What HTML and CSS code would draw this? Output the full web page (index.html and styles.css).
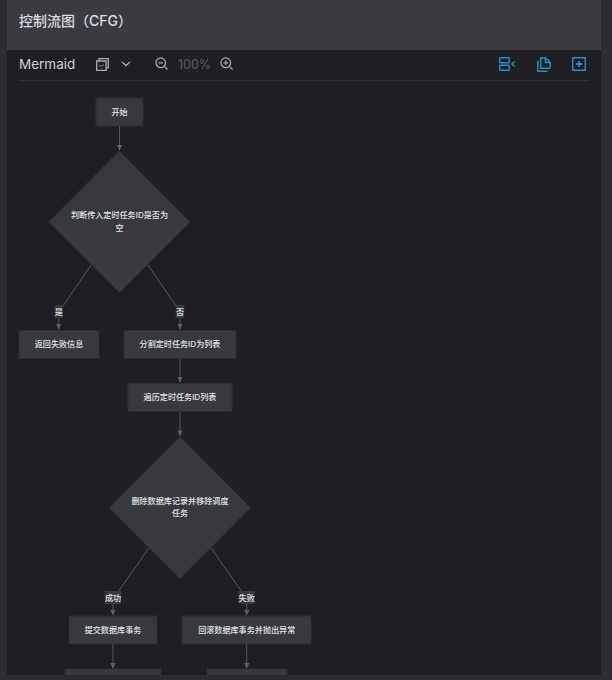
FILE: index.html
```html
<!DOCTYPE html>
<html lang="zh">
<head>
<meta charset="utf-8">
<title>控制流图（CFG）</title>
<link rel="stylesheet" href="styles.css">
</head>
<body>
<div class="app">
  <main class="panel">
    <header class="panel-head"><h1 class="panel-title">控制流图（CFG）</h1></header>
    <div class="toolbar">
      <span class="tool-name">Mermaid</span>
      <div class="tool-left">
        <svg class="ic ic-layers" viewBox="0 0 13 13"><path d="M3 2.600V.7h9.300V9.800h-2M.7 3h9.400v9.300H.7z"/><path class="thin" d="M3 8.500l1.600-1 1.300.6L8 6.300"/></svg>
        <svg class="ic ic-chev" viewBox="0 0 10 6"><path d="M1 1l4 3.600L9 1"/></svg>
        <svg class="ic ic-zoom-out" viewBox="0 0 14 14"><circle cx="6" cy="6" r="5"/><path d="M9.700 9.700L13 13M3.600 6h4.800"/></svg>
        <span class="zoom-val">100%</span>
        <svg class="ic ic-zoom-in" viewBox="0 0 14 14"><circle cx="6" cy="6" r="5"/><path d="M9.700 9.700L13 13M3.600 6h4.800M6 3.600v4.800"/></svg>
      </div>
      <div class="tool-right">
        <svg class="ib ib-split" viewBox="0 0 16 14"><rect x=".7" y=".7" width="9.600" height="5" rx=".8"/><rect x=".7" y="8.300" width="9.600" height="5" rx=".8"/><path d="M15.400 4.500L13 7l2.400 2.500"/></svg>
        <svg class="ib ib-doc" viewBox="0 0 14 15"><path d="M3.700 11.200V1h5l4.500 4.500v4.500a1.200 1.200 0 0 1-1.200 1.200z"/><path d="M8.400 1v4.600H13M.8 3.600v10.600h9.600"/></svg>
        <svg class="ib ib-plus" viewBox="0 0 14 14"><rect x=".7" y=".7" width="12.600" height="12.600" rx=".6"/><path class="thick" d="M7 4v6M4 7h6"/></svg>
      </div>
    </div>
    <svg class="diagram" viewBox="7 81 594 594">
      <g class="edges">
        <path d="M119.500 126V146"/>
        <path d="M91 265L63 306"/><path d="M148 265L176 306"/>
        <path d="M58.700 318V325"/><path d="M180 318V325"/>
        <path d="M180 358V378"/><path d="M180 412V431"/>
        <path d="M149 548L118 592"/><path d="M211 548L242 592"/>
        <path d="M113 604V611"/><path d="M246.700 604V611"/>
        <path d="M113 644V664"/><path d="M246.700 644V664"/>
      </g>
      <g class="heads">
        <path d="M117 145h5l-2.500 6z"/>
        <path d="M56.200 324h5l-2.500 6z"/><path d="M177.500 324h5l-2.500 6z"/>
        <path d="M177.500 377h5l-2.500 6z"/><path d="M177.500 430.500h5l-2.500 6z"/>
        <path d="M110.500 610h5l-2.500 6z"/><path d="M244.200 610h5l-2.500 6z"/>
        <path d="M110.500 663h5l-2.500 6z"/><path d="M244.200 663h5l-2.500 6z"/>
      </g>
      <g class="nodes">
        <rect x="96" y="98" width="47" height="28"/>
        <polygon points="119.400,151 190,222 119.400,292.700 48.700,222"/>
        <rect x="19" y="330.500" width="80" height="28"/>
        <rect x="124" y="330.500" width="112" height="28"/>
        <rect x="128" y="383.500" width="104" height="28"/>
        <polygon points="180,436.700 250.700,507.700 180,578.700 109,507.700"/>
        <rect x="69" y="616" width="88" height="28"/>
        <rect x="182" y="616" width="129" height="28"/>
        <rect x="65" y="669" width="96" height="28"/>
        <rect x="207" y="669" width="80" height="28"/>
      </g>
      <g class="label-bg">
        <rect x="54.500" y="305" width="8.500" height="13"/>
        <rect x="175.700" y="305" width="8.500" height="13"/>
        <rect x="104.700" y="591" width="16.500" height="13"/>
        <rect x="238.300" y="591" width="16.500" height="13"/>
      </g>
      <g class="texts">
        <text x="119.500" y="114.500">开始</text>
        <text x="119.500" y="218">判断传入定时任务ID是否为</text>
        <text x="119.500" y="231">空</text>
        <text x="59" y="347">返回失败信息</text>
        <text x="180" y="347">分割定时任务ID为列表</text>
        <text x="180" y="400">遍历定时任务ID列表</text>
        <text x="180" y="504">删除数据库记录并移除调度</text>
        <text x="180" y="516">任务</text>
        <text x="58.700" y="314.500">是</text>
        <text x="180" y="314.500">否</text>
        <text x="113" y="600.500">成功</text>
        <text x="246.700" y="600.500">失败</text>
        <text x="113" y="633">提交数据库事务</text>
        <text x="246.700" y="633">回滚数据库事务并抛出异常</text>
      </g>
    </svg>
  </main>
</div>
</body>
</html>
```
FILE: styles.css
```css
* { box-sizing: border-box; }
html, body { margin: 0; padding: 0; }
body { background: #2b2c30; font-family: Inter, "Noto Sans CJK SC", sans-serif; }
.app { width: 612px; height: 680px; overflow: hidden; padding: 0 11px 5px 7px; }
.panel { height: 675px; display: flex; flex-direction: column; background: #1e1f23; }
.panel-head { height: 50px; flex: none; background: #3a3b40; padding: 12px 12px 0; }
.panel-title { margin: 0; font-size: 14px; font-weight: 500; line-height: 18px; color: #dcdde0; font-family: Inter, "Noto Sans CJK SC", sans-serif; }
.toolbar { height: 31px; flex: none; margin: 0 12px; display: flex; align-items: center; border-bottom: 1px solid #2d2e32; padding-bottom: 2px; }
.tool-name { width: 77px; font-size: 13.500px; color: #c9d2dc; flex: none; }
.tool-left { display: flex; align-items: center; flex: 1; }
.tool-right { display: flex; align-items: center; padding-right: 3px; }
.ic { fill: none; stroke: #a9abaf; stroke-width: 1.300; display: block; flex: none; }
.ic .thin { stroke-width: .8; }
.ic-layers { width: 13px; height: 13px; }
.ic-chev { width: 10px; height: 6px; margin-left: 12px; }
.ic-zoom-out { width: 13.500px; height: 13.500px; margin-left: 24px; }
.zoom-val { width: 32px; margin-left: 9.500px; font-size: 12.500px; color: #565d65; }
.ic-zoom-in { width: 13.500px; height: 13.500px; margin-left: 10px; }
.ib { fill: none; stroke: #2f8cc0; stroke-width: 1.500; display: block; flex: none; }
.ib-split { width: 16px; height: 14px; }
.ib-doc { width: 14px; height: 15px; margin-left: 22px; }
.ib-plus { width: 14px; height: 14px; margin-left: 21px; }
.ib .thick { stroke-width: 1.800; }
.diagram { display: block; width: 594px; height: 594px; flex: none; }
.edges path { fill: none; stroke: #55565a; stroke-width: 1; }
.heads path { fill: #5f6064; }
.nodes rect, .nodes polygon { fill: #38393e; stroke: #2d2e32; stroke-width: 1; }
.label-bg rect { fill: #38393e; }
.texts text { fill: #e2e4e6; font-size: 8.100px; font-weight: 500; text-anchor: middle; font-family: Inter, "Noto Sans CJK SC", sans-serif; }
```
